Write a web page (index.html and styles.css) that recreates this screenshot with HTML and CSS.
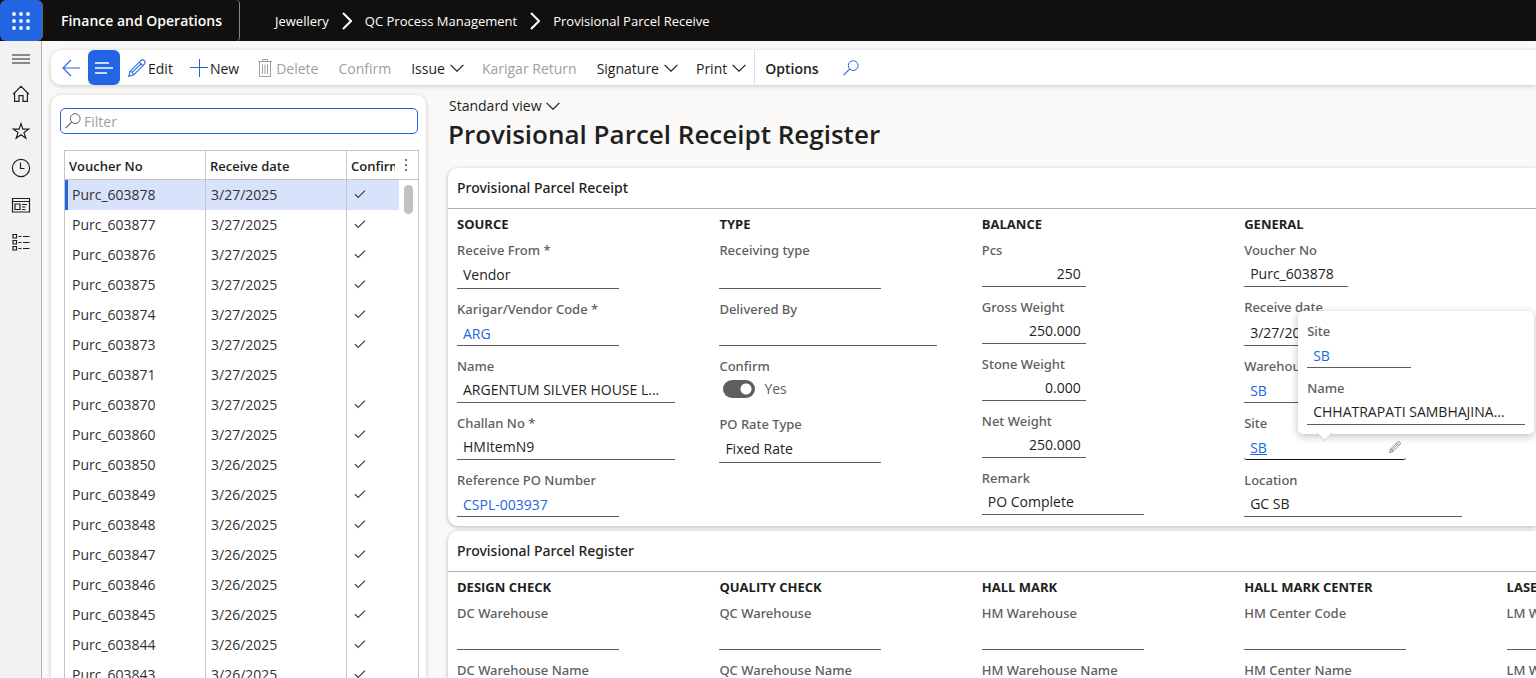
FILE: index.html
```
<!DOCTYPE html>
<html lang="en">
<head>
<meta charset="utf-8">
<meta name="viewport" content="width=device-width, initial-scale=1">
<title>Provisional Parcel Receive</title>
<link rel="stylesheet" href="styles.css">
</head>
<body>
<svg class="defs" aria-hidden="true">
  <symbol id="check" viewBox="0 0 12 10"><path d="M1 4.200 4.200 7.400 11 .6" fill="none" stroke="#484644" stroke-width="1.3"/></symbol>
  <symbol id="down" viewBox="0 0 14 8"><path d="M.6.8 7 7.2 13.4.8" fill="none" stroke="currentColor" stroke-width="1.2"/></symbol>
  <symbol id="right" viewBox="0 0 10 18"><path d="M1 1 9 9 1 17" fill="none" stroke="currentColor" stroke-width="2"/></symbol>
  <symbol id="lens" viewBox="0 0 16 16"><circle cx="10.2" cy="5.6" r="4.9" fill="none" stroke="currentColor"/><path d="M6.6 9.2.6 15.2" fill="none" stroke="currentColor" stroke-width="1.1"/></symbol>
  <symbol id="pencil" viewBox="0 0 18 18"><path d="M.8 17.2 2.2 12.2 12.8 1.6Q14.6.2 16.3 1.7 17.8 3.4 16.4 5.2L5.8 15.8ZM2.2 12.2Q4.8 12.8 5.8 15.8M11.3 3.1 14.9 6.7M4.2 13.4 13 4.8" fill="none" stroke="currentColor" stroke-width="1.1"/></symbol>
</svg>

<header class="topbar">
  <button class="launcher" aria-label="App launcher">
    <svg width="18" height="18" viewBox="0 0 18 18" fill="#fff"><circle cx="2" cy="2" r="1.9"/><circle cx="9" cy="2" r="1.9"/><circle cx="16" cy="2" r="1.9"/><circle cx="2" cy="9" r="1.9"/><circle cx="9" cy="9" r="1.9"/><circle cx="16" cy="9" r="1.9"/><circle cx="2" cy="16" r="1.9"/><circle cx="9" cy="16" r="1.9"/><circle cx="16" cy="16" r="1.9"/></svg>
  </button>
  <a class="brand" href="#">Finance and Operations</a>
  <nav class="crumbs" aria-label="Breadcrumb">
    <a href="#">Jewellery</a>
    <svg width="10" height="18"><use href="#right"/></svg>
    <a href="#">QC Process Management</a>
    <svg width="10" height="18"><use href="#right"/></svg>
    <a href="#">Provisional Parcel Receive</a>
  </nav>
</header>

<div class="shell">
  <nav class="rail" aria-label="Navigation">
    <button class="expand" aria-label="Expand"><svg width="20" height="20" viewBox="0 0 20 20"><path d="M1 7h18M1 11h18M1 15h18"/></svg></button>
    <button aria-label="Home"><svg width="20" height="20" viewBox="0 0 20 20"><path d="M2 10.3 10 2.4l8 7.9M3.6 8.8V17.4H8V11.6h4v5.8h4.4V8.8"/></svg></button>
    <button aria-label="Favorites"><svg width="20" height="20" viewBox="0 0 20 20"><path d="M10 2.6l1.9 5.6h5.7l-4.6 3.4 1.8 5.6L10 13.7l-4.8 3.5L7 11.6 2.4 8.2h5.7Z"/></svg></button>
    <button aria-label="Recent"><svg width="20" height="20" viewBox="0 0 20 20"><circle cx="10" cy="10" r="8.6"/><path d="M9.5 4.5v6h4"/></svg></button>
    <button aria-label="Workspaces"><svg width="20" height="20" viewBox="0 0 20 20"><path d="M1.5 3.5h17v13.5h-17ZM1.5 6.5h17M4 9h5v5.500H4ZM11 9.500h5M11 12h3.500M11 14.500h3.500"/></svg></button>
    <button aria-label="Modules"><svg width="20" height="20" viewBox="0 0 20 20"><path d="M2 2.500h3.500V6H2ZM2 8.500h3.500V12H2ZM2 14.500h3.500V18H2ZM7.500 4.500h3M12 4.500h6.500M7.500 10.500h3M12 10.500h6.500M7.500 16.500h3M12 16.500h6.500"/></svg></button>
  </nav>

  <main class="workspace">
    <div class="toolbar">
      <button class="back" aria-label="Back"><svg width="18" height="18" viewBox="0 0 18 18"><path d="M18 9H1M9 1 1 9l8 8" fill="none" stroke="currentColor" stroke-width="1.1"/></svg></button>
      <button class="list-toggle" aria-label="Show list"><svg width="20" height="14" viewBox="0 0 20 14"><path d="M1 2h14M1 7h18M1 12h12" fill="none" stroke="#fff" stroke-width="1.500"/></svg></button>
      <button class="cmd edit"><svg width="18" height="18"><use href="#pencil"/></svg><span>Edit</span></button>
      <button class="cmd new"><svg width="18" height="18" viewBox="0 0 18 18"><path d="M0 8.500h18M9.500 0v18" fill="none" stroke="#2266e3"/></svg><span>New</span></button>
      <button class="cmd delete" disabled><svg width="14" height="18" viewBox="0 0 14 18"><path d="M0 2.500h14M4.500 2V.5h5V2M1.500 3v14.500h11V3M4.500 5.500v9.500M7 5.500v9.500M9.500 5.500v9.500" fill="none" stroke="currentColor"/></svg><span>Delete</span></button>
      <button class="cmd confirm" disabled><span>Confirm</span></button>
      <button class="cmd menu"><span>Issue</span><svg width="14" height="8"><use href="#down"/></svg></button>
      <button class="cmd" disabled><span>Karigar Return</span></button>
      <button class="cmd menu"><span>Signature</span><svg width="14" height="8"><use href="#down"/></svg></button>
      <button class="cmd menu"><span>Print</span><svg width="14" height="8"><use href="#down"/></svg></button>
      <button class="cmd options"><span>Options</span></button>
      <button class="find" aria-label="Search"><svg width="16" height="16"><use href="#lens"/></svg></button>
    </div>

    <div class="columns">
      <section class="list-pane">
        <label class="filter"><svg width="16" height="16"><use href="#lens"/></svg><input type="text" placeholder="Filter" aria-label="Filter"></label>
        <div class="grid-wrap">
          <table>
            <colgroup><col class="c-voucher"><col class="c-date"><col><col class="c-more"></colgroup>
            <thead><tr><th>Voucher No</th><th>Receive date</th><th><span class="clip">Confirm</span></th><th class="more"><button aria-label="Column options"><svg width="4" height="14" viewBox="0 0 4 14" fill="#444"><circle cx="2" cy="2" r="1"/><circle cx="2" cy="7" r="1"/><circle cx="2" cy="12" r="1"/></svg></button></th></tr></thead>
            <tbody>
              <tr class="selected"><td>Purc_603878</td><td>3/27/2025</td><td><svg width="12" height="10"><use href="#check"/></svg></td><td></td></tr>
              <tr><td>Purc_603877</td><td>3/27/2025</td><td><svg width="12" height="10"><use href="#check"/></svg></td><td></td></tr>
              <tr><td>Purc_603876</td><td>3/27/2025</td><td><svg width="12" height="10"><use href="#check"/></svg></td><td></td></tr>
              <tr><td>Purc_603875</td><td>3/27/2025</td><td><svg width="12" height="10"><use href="#check"/></svg></td><td></td></tr>
              <tr><td>Purc_603874</td><td>3/27/2025</td><td><svg width="12" height="10"><use href="#check"/></svg></td><td></td></tr>
              <tr><td>Purc_603873</td><td>3/27/2025</td><td><svg width="12" height="10"><use href="#check"/></svg></td><td></td></tr>
              <tr><td>Purc_603871</td><td>3/27/2025</td><td></td><td></td></tr>
              <tr><td>Purc_603870</td><td>3/27/2025</td><td><svg width="12" height="10"><use href="#check"/></svg></td><td></td></tr>
              <tr><td>Purc_603860</td><td>3/27/2025</td><td><svg width="12" height="10"><use href="#check"/></svg></td><td></td></tr>
              <tr><td>Purc_603850</td><td>3/26/2025</td><td><svg width="12" height="10"><use href="#check"/></svg></td><td></td></tr>
              <tr><td>Purc_603849</td><td>3/26/2025</td><td><svg width="12" height="10"><use href="#check"/></svg></td><td></td></tr>
              <tr><td>Purc_603848</td><td>3/26/2025</td><td><svg width="12" height="10"><use href="#check"/></svg></td><td></td></tr>
              <tr><td>Purc_603847</td><td>3/26/2025</td><td><svg width="12" height="10"><use href="#check"/></svg></td><td></td></tr>
              <tr><td>Purc_603846</td><td>3/26/2025</td><td><svg width="12" height="10"><use href="#check"/></svg></td><td></td></tr>
              <tr><td>Purc_603845</td><td>3/26/2025</td><td><svg width="12" height="10"><use href="#check"/></svg></td><td></td></tr>
              <tr><td>Purc_603844</td><td>3/26/2025</td><td><svg width="12" height="10"><use href="#check"/></svg></td><td></td></tr>
              <tr><td>Purc_603843</td><td>3/26/2025</td><td><svg width="12" height="10"><use href="#check"/></svg></td><td></td></tr>
            </tbody>
          </table>
          <span class="thumb"></span>
        </div>
      </section>

      <section class="detail">
        <button class="view-switch">Standard view<svg width="14" height="8"><use href="#down"/></svg></button>
        <h1>Provisional Parcel Receipt Register</h1>

        <section class="panel">
          <h2>Provisional Parcel Receipt</h2>
          <div class="groups">
            <div class="group">
              <h3>SOURCE</h3>
              <div class="field tall"><label for="from">Receive From *</label><select id="from" class="control"><option>Vendor</option></select></div>
              <div class="field"><span class="label">Karigar/Vendor Code *</span><div class="control link"><a href="#">ARG</a></div></div>
              <div class="field wide"><label for="name">Name</label><input id="name" class="control" value="ARGENTUM SILVER HOUSE L..."></div>
              <div class="field wide"><label for="challan">Challan No *</label><input id="challan" class="control" value="HMItemN9"></div>
              <div class="field"><span class="label">Reference PO Number</span><div class="control link"><a href="#">CSPL-003937</a></div></div>
            </div>
            <div class="group">
              <h3>TYPE</h3>
              <div class="field tall"><label for="rtype">Receiving type</label><select id="rtype" class="control"><option></option></select></div>
              <div class="field wide"><label for="deliv">Delivered By</label><input id="deliv" class="control"></div>
              <div class="field switch-field"><label for="conf">Confirm</label><div class="switch-row"><input type="checkbox" id="conf" class="switch" checked><span>Yes</span></div></div>
              <div class="field tall"><label for="rate">PO Rate Type</label><select id="rate" class="control"><option>Fixed Rate</option></select></div>
            </div>
            <div class="group">
              <h3>BALANCE</h3>
              <div class="field narrow number"><label for="pcs">Pcs</label><input id="pcs" class="control" value="250"></div>
              <div class="field narrow number"><label for="gross">Gross Weight</label><input id="gross" class="control" value="250.000"></div>
              <div class="field narrow number"><label for="stone">Stone Weight</label><input id="stone" class="control" value="0.000"></div>
              <div class="field narrow number"><label for="net">Net Weight</label><input id="net" class="control" value="250.000"></div>
              <div class="field"><label for="remark">Remark</label><input id="remark" class="control" value="PO Complete"></div>
            </div>
            <div class="group">
              <h3>GENERAL</h3>
              <div class="field narrow"><label for="voucher">Voucher No</label><input id="voucher" class="control" value="Purc_603878"></div>
              <div class="field narrow tall"><label for="rdate">Receive date</label><input id="rdate" class="control" value="3/27/2025"></div>
              <div class="field"><span class="label">Warehouse</span><div class="control link"><a href="#">SB</a></div></div>
              <div class="field site">
                <span class="label">Site</span>
                <div class="control link active"><a href="#">SB</a><button aria-label="Edit site"><svg width="12" height="12"><use href="#pencil"/></svg></button></div>
                <div class="popover">
                  <div class="field narrow"><span class="label">Site</span><div class="control link"><a href="#">SB</a></div></div>
                  <div class="field wide"><label for="sitename">Name</label><input id="sitename" class="control" value="CHHATRAPATI SAMBHAJINA..."></div>
                </div>
              </div>
              <div class="field wide"><label for="loc">Location</label><input id="loc" class="control" value="GC SB"></div>
            </div>
          </div>
        </section>

        <section class="panel">
          <h2>Provisional Parcel Register</h2>
          <div class="groups">
            <div class="group"><h3>DESIGN CHECK</h3>
              <div class="field"><label for="dc">DC Warehouse</label><input id="dc" class="control"></div>
              <div class="field"><label for="dcn">DC Warehouse Name</label><input id="dcn" class="control"></div></div>
            <div class="group"><h3>QUALITY CHECK</h3>
              <div class="field"><label for="qc">QC Warehouse</label><input id="qc" class="control"></div>
              <div class="field"><label for="qcn">QC Warehouse Name</label><input id="qcn" class="control"></div></div>
            <div class="group"><h3>HALL MARK</h3>
              <div class="field"><label for="hm">HM Warehouse</label><input id="hm" class="control"></div>
              <div class="field"><label for="hmn">HM Warehouse Name</label><input id="hmn" class="control"></div></div>
            <div class="group"><h3>HALL MARK CENTER</h3>
              <div class="field"><label for="hc">HM Center Code</label><input id="hc" class="control"></div>
              <div class="field"><label for="hcn">HM Center Name</label><input id="hcn" class="control"></div></div>
            <div class="group"><h3>LASER MARK</h3>
              <div class="field"><label for="lm">LM Warehouse</label><input id="lm" class="control"></div>
              <div class="field"><label for="lmn">LM Warehouse Name</label><input id="lmn" class="control"></div></div>
          </div>
        </section>
      </section>
    </div>
  </main>
</div>
</body>
</html>
```
FILE: styles.css
```
* { box-sizing: border-box; }
body {
  margin: 0; height: 100vh; overflow: hidden;
  display: flex; flex-direction: column;
  font: 14px/20px "Segoe UI", "Open Sans", "Noto Sans", sans-serif;
  color: #201f1e; background: #faf9f8;
}
button, input, select { font: inherit; color: inherit; background: none; border: 0; padding: 0; margin: 0; border-radius: 0; outline: 0; }
a { color: #2266e3; text-decoration: none; }
svg { flex: none; display: block; }
h1, h2, h3 { margin: 0; font-weight: 600; }
.defs { position: absolute; width: 0; height: 0; }

.topbar { flex: none; height: 41px; background: #11100f; display: flex; align-items: center; }
.topbar a { color: #fff; }
.launcher { width: 43px; height: 41px; background: #2266e3; border-radius: 6px; border-right: 1px solid #666; display: grid; place-items: center; }
.brand { align-self: stretch; width: 197px; padding-left: 18px; line-height: 42px; font-weight: 600; border-right: 1px solid #8a8886; border-radius: 4px; white-space: nowrap; }
.crumbs { display: flex; align-items: center; gap: 13px; padding-left: 35px; font-size: 13px; color: #fff; white-space: nowrap; }

.shell { flex: 1; min-height: 0; display: flex; }
.rail { flex: none; width: 42px; background: #f3f2f1; border-right: 1px solid #b3b0ad; display: flex; flex-direction: column; }
.rail button { height: 37px; display: grid; place-items: center; }
.rail .expand { height: 34px; }
.rail svg { fill: none; stroke: #201f1e; stroke-width: 1.2; }

.workspace { flex: 1; min-width: 0; overflow: hidden; padding: 9px 0 0 9px; display: flex; flex-direction: column; gap: 10px; }
.toolbar { flex: none; height: 35px; background: #fff; border-radius: 10px 0 0 10px; box-shadow: 0 1px 5px #0003; display: flex; align-items: stretch; white-space: nowrap; }
.toolbar button { display: flex; align-items: center; }
.toolbar span { padding-top: 2px; }
.back { width: 37px; justify-content: center; padding-left: 3px; color: #2266e3; }
.list-toggle { width: 32px; background: #2266e3; border-radius: 6px; justify-content: center; }
.cmd { margin-right: 20px; }
.cmd:disabled { color: #a19f9d; }
.cmd.edit { margin-left: 8px; gap: 2px; margin-right: 17px; }
.cmd.edit svg { color: #2266e3; }
.cmd.new { gap: 2px; margin-right: 19px; }
.cmd.delete { gap: 4px; }
.cmd.menu { gap: 5px; margin-right: 18px; }
.cmd.options { font-weight: 600; margin-left: -10px; padding-left: 10px; margin-right: 24px; border-left: 1px solid #e1dfdd; }
.find { color: #2266e3; }

.columns { flex: 1; min-height: 0; display: flex; gap: 22px; }
.list-pane { flex: none; width: 375px; background: #fff; border-radius: 10px 10px 0 0; box-shadow: 0 1px 5px #0003; padding: 13px 8px 0 9px; display: flex; flex-direction: column; gap: 16px; }
.filter { flex: none; height: 26px; border: 1px solid #2266e3; border-radius: 5px; display: flex; align-items: center; gap: 3px; padding-left: 4px; color: #605e5c; }
.filter input { flex: 1; min-width: 0; padding-top: 2px; }
.filter input::placeholder { color: #a19f9d; opacity: 1; }
.grid-wrap { position: relative; flex: 1; min-height: 0; overflow: hidden; margin: 0 -1px 0 4px; border: 1px solid #c8c6c4; border-bottom: 0; }
table { width: 100%; table-layout: fixed; border-collapse: separate; border-spacing: 0; }
.c-voucher { width: 140px; }
.c-date { width: 141px; }
.c-more { width: 19px; }
th { height: 29px; padding: 2px 0 0 4px; text-align: left; font-size: 13px; font-weight: 600; border-bottom: 1px solid #c8c6c4; }
th:nth-child(n+2):nth-child(-n+3), td:nth-child(n+2):nth-child(-n+3) { border-left: 1px solid #c8c6c4; }
.clip { display: block; width: 44px; overflow: hidden; }
.more { padding: 0; }
.more button { display: grid; place-items: center; width: 14px; height: 20px; }
td { height: 30px; padding: 0 0 0 7px; color: #323130; }
td:nth-child(2) { padding-left: 5px; }
.selected td:not(:last-child) { background: #d8e3fb; }
.selected td:first-child { box-shadow: inset 3px 0 #2266e3; }
.thumb { position: absolute; right: 5px; top: 34px; width: 9px; height: 29px; border-radius: 5px; background: #c1c1c1; }

.detail { flex: 1; min-width: 0; }
.view-switch { display: flex; align-items: center; gap: 4px; height: 22px; padding-left: 1px; }
h1 { font-size: 26px; line-height: 34px; margin-bottom: 17px; white-space: nowrap; }
.panel { background: #fff; border-radius: 10px 0 0 10px; box-shadow: 0 1px 4px #0004; margin-bottom: 5px; }
h2 { font-family: "Segoe UI", "Noto Sans", "Open Sans", sans-serif; font-size: 14px; line-height: 40px; padding: 0 9px; border-bottom: 1px solid #b3b0ad; font-weight: 500; }
.groups { display: grid; grid-template-columns: repeat(5, 1fr); min-width: 1321px; padding: 6px 0 9px 9px; }
.group { display: flex; flex-direction: column; gap: 11px; }
h3 { font-size: 13px; line-height: 18px; font-weight: 700; margin-bottom: -3px; }
.field { width: 162px; display: flex; flex-direction: column; }
.field.wide { width: 218px; }
.field.narrow { width: 104px; }
.field > label, .field > .label { font-family: "Segoe UI", "Noto Sans", "Open Sans", sans-serif; font-size: 13px; line-height: 18px; font-weight: 500; color: #605e5c; white-space: nowrap; }
.control { height: 28px; width: 100%; padding: 1px 5px 0 6px; border-bottom: 1px solid #605e5c; text-overflow: ellipsis; display: flex; align-items: center; justify-content: space-between; appearance: none; color: #201f1e; }
.control.link { padding-top: 5px; }
.tall .control { height: 30px; padding-top: 3px; }
.number .control { text-align: right; }
.control.active { border-bottom-color: #11100f; border-radius: 3px; }
.control.active a { text-decoration: underline; }
.control.active button { padding-bottom: 2px; color: #605e5c; }
.switch-row { height: 29px; padding: 0 0 2px 4px; display: flex; align-items: center; gap: 9px; color: #605e5c; }
.switch { appearance: none; width: 32px; height: 18px; border-radius: 9px; background: radial-gradient(circle at 23px 9px, #fff 5px, #605e5c 6px); }
.site { position: relative; }
.popover { position: absolute; left: 54px; bottom: 26px; padding: 11px 9px 9px; background: #fff; border-radius: 5px; box-shadow: 0 2px 9px #0004; display: flex; flex-direction: column; gap: 11px; z-index: 2; }
.popover::after { content: ""; position: absolute; left: 21px; bottom: -5px; width: 10px; height: 10px; background: #fff; border: solid #d2d0ce; border-width: 0 1px 1px 0; transform: rotate(45deg); }
```
